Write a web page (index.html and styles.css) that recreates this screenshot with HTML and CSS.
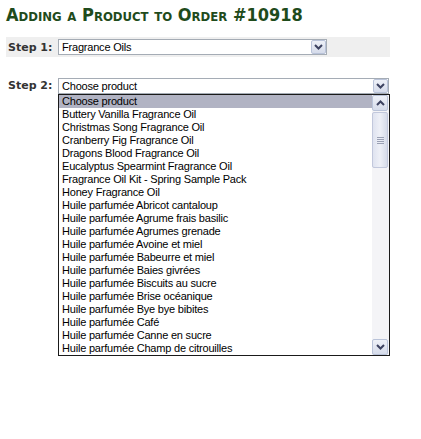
FILE: index.html
```html
<!DOCTYPE html>
<html lang="en">
<head>
    <meta charset="UTF-8">
    <title>Adding a Product to Order #10918</title>
    <link rel="stylesheet" href="styles.css">
</head>
<body>
    <div class="page">
        <h1 class="title">Adding a Product to Order #10918</h1>

        <div class="step-row shaded">
            <span class="step-label">Step 1:</span>
            <div class="combo combo-short">
                <span class="combo-text">Fragrance Oils</span>
                <span class="arrow-btn">
                    <svg width="9" height="6" viewBox="0 0 9 6"><polyline points="1,1 4.5,4.5 8,1" fill="none" stroke="#3c4260" stroke-width="2"/></svg>
                </span>
            </div>
        </div>

        <div class="step-row open">
            <span class="step-label">Step 2:</span>
            <div class="picker">
                <div class="combo combo-long">
                    <span class="combo-text">Choose product</span>
                    <span class="arrow-btn">
                        <svg width="9" height="6" viewBox="0 0 9 6"><polyline points="1,1 4.5,4.5 8,1" fill="none" stroke="#3c4260" stroke-width="2"/></svg>
                    </span>
                </div>

                <div class="dropdown">
                    <ul class="options">
                        <li class="selected">Choose product</li>
                        <li>Buttery Vanilla Fragrance Oil</li>
                        <li>Christmas Song Fragrance Oil</li>
                        <li>Cranberry Fig Fragrance Oil</li>
                        <li>Dragons Blood Fragrance Oil</li>
                        <li>Eucalyptus Spearmint Fragrance Oil</li>
                        <li>Fragrance Oil Kit - Spring Sample Pack</li>
                        <li>Honey Fragrance Oil</li>
                        <li>Huile parfumée Abricot cantaloup</li>
                        <li>Huile parfumée Agrume frais basilic</li>
                        <li>Huile parfumée Agrumes grenade</li>
                        <li>Huile parfumée Avoine et miel</li>
                        <li>Huile parfumée Babeurre et miel</li>
                        <li>Huile parfumée Baies givrées</li>
                        <li>Huile parfumée Biscuits au sucre</li>
                        <li>Huile parfumée Brise océanique</li>
                        <li>Huile parfumée Bye bye bibites</li>
                        <li>Huile parfumée Café</li>
                        <li>Huile parfumée Canne en sucre</li>
                        <li>Huile parfumée Champ de citrouilles</li>
                    </ul>
                    <div class="scrollbar">
                        <span class="scroll-btn">
                            <svg width="9" height="6" viewBox="0 0 9 6"><polyline points="1,5 4.5,1.5 8,5" fill="none" stroke="#3c4260" stroke-width="2"/></svg>
                        </span>
                        <div class="track">
                            <div class="thumb">
                                <span class="grip"></span>
                            </div>
                        </div>
                        <span class="scroll-btn">
                            <svg width="9" height="6" viewBox="0 0 9 6"><polyline points="1,1 4.5,4.5 8,1" fill="none" stroke="#3c4260" stroke-width="2"/></svg>
                        </span>
                    </div>
                </div>
            </div>
        </div>
    </div>
</body>
</html>
```

FILE: styles.css
```css
* {
    margin: 0;
    padding: 0;
    box-sizing: border-box;
}

body {
    background: #fff;
    font-family: "DejaVu Sans", Verdana, sans-serif;
    color: #000;
}

.page {
    padding: 4px 6px;
}

.title {
    font-family: "DejaVu Sans Condensed", "DejaVu Sans", sans-serif;
    font-size: 18px;
    font-weight: bold;
    font-variant: small-caps;
    color: #1f4b1c;
    line-height: 22px;
    margin-bottom: 11px;
}

.step-row {
    display: flex;
    align-items: center;
    width: 384px;
    height: 20px;
    margin-bottom: 21px;
}

.shaded {
    background: #efefef;
}

.step-row.open {
    align-items: flex-start;
    height: auto;
}

.step-row.open .step-label {
    line-height: 16px;
}

.step-label {
    width: 52px;
    padding-left: 2px;
    font-size: 11px;
    font-weight: bold;
    color: #333;
}

.picker {
    display: flex;
    flex-direction: column;
}

.combo {
    display: flex;
    align-items: center;
    height: 16px;
    background: #fff;
    border: 1px solid #a5acb5;
    font-family: "Liberation Sans", Arial, sans-serif;
    font-size: 11px;
    letter-spacing: -0.2px;
}

.combo-short {
    width: 269px;
}

.combo-long {
    width: 331px;
}

.combo-text {
    flex: 1;
    padding-left: 3px;
}

.arrow-btn, .scroll-btn {
    display: flex;
    align-items: center;
    justify-content: center;
    width: 15px;
    height: 14px;
    border: 1px solid #b9c3d9;
    border-radius: 2px;
    background: linear-gradient(#eef1f8, #d5dbea);
}

.dropdown {
    display: flex;
    width: 332px;
    height: 262px;
    background: #fff;
    border: 1px solid #1a1a1a;
    font-family: "Liberation Sans", Arial, sans-serif;
    font-size: 11px;
    letter-spacing: -0.2px;
}

.options {
    list-style: none;
    flex: 1;
}

.options li {
    height: 13px;
    line-height: 13px;
    padding-left: 3px;
    white-space: nowrap;
}

.options li.selected {
    background: #b1b3c3;
}

.scrollbar {
    width: 17px;
    display: flex;
    flex-direction: column;
    background: #f4f4f7;
}

.scroll-btn {
    width: 16px;
    height: 16px;
}

.track {
    flex: 1;
    padding-top: 1px;
}

.thumb {
    display: flex;
    align-items: center;
    justify-content: center;
    width: 16px;
    height: 56px;
    border: 1px solid #c2c8dc;
    border-radius: 2px;
    background: linear-gradient(to right, #dfe3f0, #eef0f7 50%, #d6dbe9);
}

.grip {
    width: 7px;
    height: 7px;
    background: repeating-linear-gradient(#9aa0b4 0 1px, transparent 1px 2px);
}
```
